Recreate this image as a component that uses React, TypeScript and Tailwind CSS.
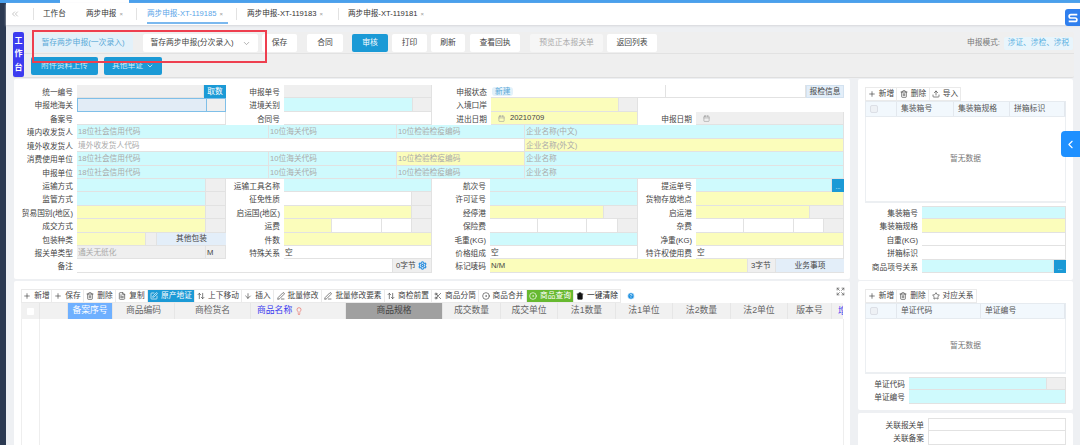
import type { ReactNode } from "react";
import {
  ArrowDown,
  ArrowUpDown,
  Calendar,
  ChevronDown,
  ChevronLeft,
  ChevronsLeft,
  CircleDot,
  CircleHelp,
  Expand,
  FileText,
  Lightbulb,
  PenLine,
  Plus,
  Scissors,
  Settings,
  SquarePen,
  Star,
  Trash2,
  Upload,
} from "lucide-react";

const CYAN = "bg-[#cffafd]";
const YELLOW = "bg-[#fbfdbb]";
const GRAY = "bg-[#efefef]";
const WHITE = "bg-white";

function Label({ className, children }: { className: string; children: ReactNode }) {
  return (
    <div className={`${className} h-full shrink-0 pr-[4px] text-right text-[7.7px] leading-[15px] text-[#444] whitespace-nowrap`}>
      {children}
    </div>
  );
}

function Cell({ className, children }: { className: string; children?: ReactNode }) {
  return (
    <div className={`${className} h-full shrink-0 border-r border-b border-[#e2e2e2] pl-[1px] text-[7.7px] leading-[14px] text-[#aaa] whitespace-nowrap overflow-hidden`}>
      {children}
    </div>
  );
}

function Row({ children }: { children: ReactNode }) {
  return <div className="flex h-[13.43px]">{children}</div>;
}

function Tab({ text, active, close = true, className }: { text: string; active?: boolean; close?: boolean; className: string }) {
  return (
    <div className={`${className} relative flex h-full items-center`}>
      <span className={`text-[7.6px] whitespace-nowrap ${active ? "text-[#5aa5e8]" : "text-[#333]"}`}>{text}</span>
      {close && <span className="ml-[3px] text-[6px] text-[#999]">×</span>}
      {active && <div className="absolute bottom-[1px] left-0 h-[2px] w-[81px] bg-[#7ab8ef]" />}
    </div>
  );
}

function TabSep() {
  return <div className="h-[12px] w-px shrink-0 bg-[#e2e2e2]" />;
}

function TopBtn({ className, children }: { className: string; children: ReactNode }) {
  return (
    <div className={`${className} flex h-[18px] shrink-0 items-center justify-center rounded-[2px] text-[7.8px] whitespace-nowrap`}>
      {children}
    </div>
  );
}

function Tool({ icon, text, className = "text-[#555]" }: { icon: ReactNode; text: string; className?: string }) {
  return (
    <div className={`${className} flex h-full shrink-0 items-center justify-center gap-[3px] border-y border-r border-[#eaeaea] text-[7.7px] whitespace-nowrap`}>
      {icon}
      {text}
    </div>
  );
}

function Head({ className, children }: { className: string; children?: ReactNode }) {
  return (
    <div className={`${className} flex h-full shrink-0 items-center justify-center border-r border-[#e6e6e6] text-[8.8px] whitespace-nowrap overflow-hidden`}>
      {children}
    </div>
  );
}

function SideHead({ className, children }: { className: string; children?: ReactNode }) {
  return (
    <div className={`${className} flex h-full shrink-0 items-center border-r border-[#e3e8ee] pl-[4px] text-[7.8px] text-[#555] whitespace-nowrap`}>
      {children}
    </div>
  );
}

function Check() {
  return <div className="h-[8px] w-[8px] rounded-[2px] border border-[#dcdfe6] bg-[#eef1f5]" />;
}

function Dots() {
  return (
    <div className="flex h-full w-[12px] shrink-0 items-end justify-center bg-[#1b9ad6] pb-[2px] text-[6px] leading-[6px] text-white">
      ...
    </div>
  );
}

export default function App() {
  const ic = "h-[8px] w-[8px] shrink-0";
  return (
    <div className="relative flex h-[445px] w-[1080px] flex-col overflow-hidden bg-[#eef0f3] font-['Liberation_Sans','Noto_Sans_CJK_SC',sans-serif]">
      {/* top strip */}
      <div className="flex h-[3px] shrink-0 bg-[#4aa0ec]">
        <div className="ml-[60px] w-[69px] bg-white" />
      </div>

      <div className="flex min-h-0 flex-1">
        <div className="w-[6px] shrink-0 bg-[#2c3a52]" />

        <div className="flex min-w-0 flex-1 flex-col">
          {/* tabs */}
          <div className="flex h-[22px] shrink-0 items-center bg-white shadow-[0_1px_2px_#d5d7da]">
            <ChevronsLeft className="ml-[4px] h-[10px] w-[10px] text-[#bbb]" />
            <div className="ml-[13px]"><TabSep /></div>
            <Tab text="工作台" close={false} className="ml-[9px] w-[43px]" />
            <Tab text="两步申报" className="w-[50px]" />
            <TabSep />
            <Tab text="两步申报-XT-119185" active className="ml-[10px] w-[89px]" />
            <TabSep />
            <Tab text="两步申报-XT-119183" className="ml-[10px] w-[91px]" />
            <TabSep />
            <Tab text="两步申报-XT-119181" className="ml-[9px] w-[90px]" />
          </div>

          {/* action panel */}
          <div className="ml-[7px] mt-[7px] flex h-[46px] w-[1061px] shrink-0 rounded-[2px] border-b border-[#dfdfdf] bg-[#efefef]">
            <div className="flex w-[11px] shrink-0 flex-col items-center justify-around rounded-[2px] bg-[#3c3cf0] py-[2px] text-[8px] font-bold text-white">
              <span>工</span>
              <span>作</span>
              <span>台</span>
            </div>
            <div className="min-w-0 flex-1">
              <div className="flex h-[22px] items-center border-b border-[#e2e2e2] pt-[1px]">
                <TopBtn className="ml-[9px] w-[100px] bg-[#e3f1fa] text-[#5aa9d8]">暂存两步申报(一次录入)</TopBtn>
                <TopBtn className="ml-[10px] w-[115px] gap-[8px] bg-white text-[#444]">
                  暂存两步申报(分次录入)
                  <ChevronDown className="h-[9px] w-[9px] text-[#999]" />
                </TopBtn>
                <TopBtn className="ml-[4px] w-[35px] bg-white text-[#444]">保存</TopBtn>
                <TopBtn className="ml-[10px] w-[36px] bg-white text-[#444]">合同</TopBtn>
                <TopBtn className="ml-[9px] w-[36px] bg-[#1b9ad6] text-white">审核</TopBtn>
                <TopBtn className="ml-[4px] w-[35px] bg-white text-[#444]">打印</TopBtn>
                <TopBtn className="ml-[4px] w-[34px] bg-white text-[#444]">刷新</TopBtn>
                <TopBtn className="ml-[5px] w-[50px] bg-white text-[#444]">查看回执</TopBtn>
                <TopBtn className="ml-[10px] w-[73px] bg-[#f6f6f6] text-[#aaa]">预览正本报关单</TopBtn>
                <TopBtn className="ml-[4px] w-[50px] bg-white text-[#444]">返回列表</TopBtn>
                <div className="ml-auto flex items-center pr-[1px]">
                  <span className="mr-[4px] text-[7.7px] text-[#777]">申报模式:</span>
                  <div className="flex h-[13px] w-[69px] items-center justify-center rounded-[2px] bg-[#e8f5fc] text-[7.7px] text-[#5cb2e2]">
                    涉证、涉检、涉税
                  </div>
                </div>
              </div>
              <div className="flex h-[23px] items-center">
                <TopBtn className="ml-[7px] w-[67px] bg-[#1b9ad6] text-[#d4ecf8]">附件资料上传</TopBtn>
                <TopBtn className="ml-[6px] w-[58px] gap-[3px] bg-[#1b9ad6] text-[#d4ecf8]">
                  其他单证
                  <ChevronDown className="h-[8px] w-[8px] text-white" />
                </TopBtn>
              </div>
            </div>
          </div>

          <div className="ml-[8px] mt-px flex min-h-0 flex-1 gap-[8px]">
            {/* left column */}
            <div className="flex w-[836px] shrink-0 flex-col gap-[2px]">
              <div className="h-[200px] shrink-0 rounded-[2px] bg-white pt-[6px]">
                <Row>
                  <Label className="w-[63px]">统一编号</Label>
                  <Cell className={`w-[127px] ${GRAY}`} />
                  <div className="flex h-full w-[22px] shrink-0 items-center justify-center bg-[#1b9ad6] text-[7.7px] text-white">取数</div>
                  <Label className="w-[58px]">申报单号</Label>
                  <Cell className={`w-[148px] ${GRAY}`} />
                  <Label className="w-[59px]">申报状态</Label>
                  <Cell className={`w-[175px] ${WHITE}`}>
                    <span className="rounded-[3px] bg-[#e3f1fa] px-[3px] text-[#5aa9d8]">新建</span>
                  </Cell>
                  <Cell className={`w-[140px] ${WHITE}`} />
                  <div className="flex h-full w-[38px] shrink-0 items-center justify-center border border-[#d3e2f0] bg-[#e3eef9] text-[7.7px] text-[#444]">报检信息</div>
                </Row>
                <Row>
                  <Label className="w-[63px]">申报地海关</Label>
                  <div className="flex h-full w-[149px] shrink-0 border border-[#7fbfe8]">
                    <div className="w-[129px] border-r border-[#7fbfe8] bg-[#e2ecf6]" />
                    <div className={`flex-1 ${GRAY}`} />
                  </div>
                  <Label className="w-[58px]">进境关别</Label>
                  <Cell className={`w-[129px] ${CYAN}`} />
                  <Cell className={`w-[19px] ${GRAY}`} />
                  <Label className="w-[59px]">入境口岸</Label>
                  <Cell className={`w-[128px] ${YELLOW}`} />
                  <Cell className={`w-[19px] ${GRAY}`} />
                </Row>
                <Row>
                  <Label className="w-[63px]">备案号</Label>
                  <Cell className={`w-[149px] ${WHITE}`} />
                  <Label className="w-[58px]">合同号</Label>
                  <Cell className={`w-[148px] ${WHITE}`} />
                  <Label className="w-[59px]">进出日期</Label>
                  <Cell className={`w-[147px] ${YELLOW}`}>
                    <div className="flex h-full items-center pl-[6px] text-[#444]">
                      <Calendar className="mr-[5px] h-[7px] w-[7px] text-[#999]" />
                      20210709
                    </div>
                  </Cell>
                  <Label className="w-[58px]">申报日期</Label>
                  <Cell className={`w-[148px] ${GRAY}`}>
                    <div className="flex h-full items-center pl-[6px]">
                      <Calendar className="h-[7px] w-[7px] text-[#999]" />
                    </div>
                  </Cell>
                </Row>
                <Row>
                  <Label className="w-[63px]">境内收发货人</Label>
                  <Cell className={`w-[192px] ${CYAN}`}>18位社会信用代码</Cell>
                  <Cell className={`w-[128px] ${CYAN}`}>10位海关代码</Cell>
                  <Cell className={`w-[128px] ${CYAN}`}>10位检验检疫编码</Cell>
                  <Cell className={`w-[319px] ${CYAN}`}>企业名称(中文)</Cell>
                </Row>
                <Row>
                  <Label className="w-[63px]">境外收发货人</Label>
                  <Cell className={`w-[448px] ${WHITE}`}>境外收发货人代码</Cell>
                  <Cell className={`w-[319px] ${YELLOW}`}>企业名称(外文)</Cell>
                </Row>
                <Row>
                  <Label className="w-[63px]">消费使用单位</Label>
                  <Cell className={`w-[192px] ${CYAN}`}>18位社会信用代码</Cell>
                  <Cell className={`w-[128px] ${CYAN}`}>10位海关代码</Cell>
                  <Cell className={`w-[128px] ${YELLOW}`}>10位检验检疫编码</Cell>
                  <Cell className={`w-[319px] ${CYAN}`}>企业名称</Cell>
                </Row>
                <Row>
                  <Label className="w-[63px]">申报单位</Label>
                  <Cell className={`w-[192px] ${CYAN}`}>18位社会信用代码</Cell>
                  <Cell className={`w-[128px] ${CYAN}`}>10位海关代码</Cell>
                  <Cell className={`w-[128px] ${CYAN}`}>10位检验检疫编码</Cell>
                  <Cell className={`w-[319px] ${CYAN}`}>企业名称</Cell>
                </Row>
                <Row>
                  <Label className="w-[63px]">运输方式</Label>
                  <Cell className={`w-[129px] ${CYAN}`} />
                  <Cell className={`w-[20px] ${GRAY}`} />
                  <Label className="w-[58px]">运输工具名称</Label>
                  <Cell className={`w-[148px] ${CYAN}`} />
                  <Label className="w-[58px]">航次号</Label>
                  <Cell className={`w-[148px] ${CYAN}`} />
                  <Label className="w-[58px]">提运单号</Label>
                  <Cell className={`w-[136px] ${CYAN}`} />
                  <Dots />
                </Row>
                <Row>
                  <Label className="w-[63px]">监管方式</Label>
                  <Cell className={`w-[129px] ${CYAN}`} />
                  <Cell className={`w-[20px] ${GRAY}`} />
                  <Label className="w-[58px]">征免性质</Label>
                  <Cell className={`w-[128px] ${WHITE}`} />
                  <Cell className={`w-[20px] ${GRAY}`} />
                  <Label className="w-[58px]">许可证号</Label>
                  <Cell className={`w-[148px] ${CYAN}`} />
                  <Label className="w-[58px]">货物存放地点</Label>
                  <Cell className={`w-[148px] ${YELLOW}`} />
                </Row>
                <Row>
                  <Label className="w-[63px]">贸易国别(地区)</Label>
                  <Cell className={`w-[129px] ${YELLOW}`} />
                  <Cell className={`w-[20px] ${GRAY}`} />
                  <Label className="w-[58px]">启运国(地区)</Label>
                  <Cell className={`w-[128px] ${YELLOW}`} />
                  <Cell className={`w-[20px] ${GRAY}`} />
                  <Label className="w-[58px]">经停港</Label>
                  <Cell className={`w-[114px] ${YELLOW}`} />
                  <Cell className={`w-[34px] ${GRAY}`} />
                  <Label className="w-[58px]">启运港</Label>
                  <Cell className={`w-[114px] ${YELLOW}`} />
                  <Cell className={`w-[34px] ${GRAY}`} />
                </Row>
                <Row>
                  <Label className="w-[63px]">成交方式</Label>
                  <Cell className={`w-[129px] ${YELLOW}`} />
                  <Cell className={`w-[20px] ${GRAY}`} />
                  <Label className="w-[58px]">运费</Label>
                  <Cell className={`w-[48px] ${YELLOW}`} />
                  <Cell className={`w-[50px] ${WHITE}`} />
                  <Cell className={`w-[30px] ${WHITE}`} />
                  <Cell className={`w-[20px] ${GRAY}`} />
                  <Label className="w-[58px]">保险费</Label>
                  <Cell className={`w-[48px] ${WHITE}`} />
                  <Cell className={`w-[49px] ${WHITE}`} />
                  <Cell className={`w-[31px] ${WHITE}`} />
                  <Cell className={`w-[20px] ${GRAY}`} />
                  <Label className="w-[58px]">杂费</Label>
                  <Cell className={`w-[48px] ${WHITE}`} />
                  <Cell className={`w-[50px] ${WHITE}`} />
                  <Cell className={`w-[30px] ${WHITE}`} />
                  <Cell className={`w-[20px] ${GRAY}`} />
                </Row>
                <Row>
                  <Label className="w-[63px]">包装种类</Label>
                  <Cell className={`w-[69px] ${YELLOW}`} />
                  <Cell className={`w-[11px] ${GRAY}`} />
                  <div className="flex h-full w-[69px] shrink-0 items-center justify-center border-b border-[#e2e2e2] bg-[#e3eef9] text-[7.7px] text-[#444]">其他包装</div>
                  <Label className="w-[58px]">件数</Label>
                  <Cell className={`w-[148px] ${YELLOW}`} />
                  <Label className="w-[58px]">毛重(KG)</Label>
                  <Cell className={`w-[148px] ${CYAN}`} />
                  <Label className="w-[58px]">净重(KG)</Label>
                  <Cell className={`w-[148px] ${YELLOW}`} />
                </Row>
                <Row>
                  <Label className="w-[63px]">报关单类型</Label>
                  <Cell className={`w-[129px] ${GRAY}`}>通关无纸化</Cell>
                  <Cell className={`w-[20px] ${GRAY}`}><span className="text-[#444]">M</span></Cell>
                  <Label className="w-[58px]">特殊关系</Label>
                  <Cell className={`w-[148px] ${WHITE}`}><span className="text-[#444]">空</span></Cell>
                  <Label className="w-[58px]">价格组成</Label>
                  <Cell className={`w-[148px] ${WHITE}`}><span className="text-[#444]">空</span></Cell>
                  <Label className="w-[58px]">特许权使用费</Label>
                  <Cell className={`w-[148px] ${WHITE}`}><span className="text-[#444]">空</span></Cell>
                </Row>
                <Row>
                  <Label className="w-[63px]">备注</Label>
                  <Cell className={`w-[316px] ${WHITE}`} />
                  <Cell className={`w-[39px] ${GRAY}`}>
                    <div className="flex h-full items-center pl-[2px] text-[#444]">
                      0字节
                      <Settings className="ml-[2px] h-[9px] w-[9px] text-[#2a8fe0]" strokeWidth={3} />
                    </div>
                  </Cell>
                  <Label className="w-[58px]">标记唛码</Label>
                  <Cell className={`w-[258px] ${YELLOW}`}><span className="text-[#444]">N/M</span></Cell>
                  <Cell className={`w-[28px] ${GRAY}`}><span className="pl-[2px] text-[#444]">3字节</span></Cell>
                  <div className="flex h-full w-[68px] shrink-0 items-center justify-center border-b border-[#e2e2e2] bg-[#e3eef9] text-[7.7px] text-[#444]">业务事项</div>
                </Row>
              </div>

              {/* goods table */}
              <div className="relative min-h-0 flex-1 rounded-t-[2px] bg-white px-[7px] pt-[8px]">
                <div className="absolute right-[5px] top-[6px]">
                  <Expand className="h-[9px] w-[9px] text-[#666]" />
                </div>
                <div className="flex h-[14px] items-stretch">
                  <Tool className="w-[31px] border-l text-[#444]" icon={<Plus className={ic} />} text="新增" />
                  <Tool className="w-[32px] text-[#444]" icon={<Plus className={ic} />} text="保存" />
                  <Tool className="w-[32px] text-[#444]" icon={<Trash2 className={ic} />} text="删除" />
                  <Tool className="w-[32px] text-[#444]" icon={<FileText className={ic} />} text="复制" />
                  <Tool className="w-[47px] bg-[#1b9ad6] text-white" icon={<SquarePen className={ic} />} text="原产地证" />
                  <Tool className="w-[47px] text-[#444]" icon={<ArrowUpDown className={ic} />} text="上下移动" />
                  <Tool className="w-[32px] text-[#444]" icon={<ArrowDown className={ic} />} text="插入" />
                  <Tool className="w-[48px] text-[#444]" icon={<PenLine className={ic} />} text="批量修改" />
                  <Tool className="w-[63px] text-[#444]" icon={<PenLine className={ic} />} text="批量修改要素" />
                  <Tool className="w-[47px] text-[#444]" icon={<ArrowUpDown className={ic} />} text="商检前置" />
                  <Tool className="w-[47px] text-[#444]" icon={<Scissors className={ic} />} text="商品分筒" />
                  <Tool className="w-[48px] text-[#444]" icon={<CircleDot className={ic} />} text="商品合并" />
                  <Tool className="w-[47px] bg-[#67b930] text-white" icon={<CircleDot className={ic} />} text="商品查询" />
                  <Tool className="w-[47px] text-[#222]" icon={<Trash2 className={`${ic} fill-[#111]`} />} text="一键清除" />
                  <div className="ml-[6px] flex items-center">
                    <CircleHelp className="h-[8px] w-[8px] fill-[#1b8fe0] text-white" />
                  </div>
                </div>
                <div className="flex h-[16px] w-[822px] overflow-hidden bg-[#f1f1f1] text-[#666]">
                  <Head className="w-[19px]"><div className="h-[7px] w-[7px] rounded-[1px] bg-white" /></Head>
                  <Head className="w-[28px]" />
                  <Head className="w-[45px] bg-[#6fb0ff] text-white">备案序号</Head>
                  <Head className="w-[62px]">商品编码</Head>
                  <Head className="w-[76px]">商检货名</Head>
                  <Head className="w-[95px] !justify-start pl-[6px] text-[#3a3af0]">
                    商品名称
                    <Lightbulb className="ml-[3px] h-[8px] w-[8px] text-[#e8645a]" />
                  </Head>
                  <Head className="w-[97px] bg-[#a0a0a0] text-[#444]">商品规格</Head>
                  <Head className="w-[58px]">成交数量</Head>
                  <Head className="w-[57px]">成交单位</Head>
                  <Head className="w-[58px]">法1数量</Head>
                  <Head className="w-[57px]">法1单位</Head>
                  <Head className="w-[58px]">法2数量</Head>
                  <Head className="w-[57px]">法2单位</Head>
                  <Head className="w-[44px]">版本号</Head>
                  <div className="pl-[6px] text-[8.8px] leading-[16px] text-[#3a3af0] whitespace-nowrap">增</div>
                </div>
                <div className="flex h-full w-[823px] border-x border-[#eeeeee]">
                  <div className="w-[18px] border-r border-[#eeeeee]" />
                </div>
              </div>
            </div>

            {/* right column */}
            <div className="flex w-[215px] shrink-0 flex-col">
              <div className="h-[201px] shrink-0 rounded-[2px] bg-white px-[7px] pt-[8px]">
                <div className="flex h-[14px]">
                  <Tool className="w-[32px] border-l text-[#444]" icon={<Plus className={ic} />} text="新增" />
                  <Tool className="w-[33px] text-[#444]" icon={<Trash2 className={ic} />} text="删除" />
                  <Tool className="w-[31px] text-[#444]" icon={<Upload className={ic} />} text="导入" />
                </div>
                <div className="flex h-[16px] w-[201px] border border-[#e6ebf0] bg-[#f2f8fd]">
                  <SideHead className="w-[31px]"><Check /></SideHead>
                  <SideHead className="w-[57px]">集装箱号</SideHead>
                  <SideHead className="w-[56px]">集装箱规格</SideHead>
                  <SideHead className="w-[55px]">拼箱标识</SideHead>
                </div>
                <div className="flex h-[86px] w-[201px] items-center justify-center border-x border-b-2 border-[#eceff2] text-[7.7px] text-[#777]">暂无数据</div>
                <div className="mt-[3px] w-[201px]">
                  <Row>
                    <Label className="w-[57px]">集装箱号</Label>
                    <Cell className={`w-[144px] border-t ${CYAN}`} />
                  </Row>
                  <Row>
                    <Label className="w-[57px]">集装箱规格</Label>
                    <Cell className={`w-[144px] ${YELLOW}`} />
                  </Row>
                  <Row>
                    <Label className="w-[57px]">自重(KG)</Label>
                    <Cell className={`w-[144px] ${WHITE}`} />
                  </Row>
                  <Row>
                    <Label className="w-[57px]">拼箱标识</Label>
                    <Cell className={`w-[144px] ${WHITE}`} />
                  </Row>
                  <Row>
                    <Label className="w-[57px]">商品项号关系</Label>
                    <Cell className={`w-[132px] ${CYAN}`} />
                    <Dots />
                  </Row>
                </div>
              </div>

              <div className="mt-px h-[129px] shrink-0 rounded-[2px] bg-white px-[7px] pt-[8px]">
                <div className="flex h-[14px]">
                  <Tool className="w-[32px] border-l text-[#444]" icon={<Plus className={ic} />} text="新增" />
                  <Tool className="w-[32px] text-[#444]" icon={<Trash2 className={ic} />} text="删除" />
                  <Tool className="w-[48px] text-[#444]" icon={<Star className={ic} />} text="对应关系" />
                </div>
                <div className="flex h-[16px] w-[201px] border border-[#e6ebf0] bg-[#f2f8fd]">
                  <SideHead className="w-[31px]"><Check /></SideHead>
                  <SideHead className="w-[84px]">单证代码</SideHead>
                  <SideHead className="w-[84px]">单证编号</SideHead>
                </div>
                <div className="flex h-[55px] w-[201px] items-center justify-center border-x border-b-2 border-[#eceff2] text-[7.7px] text-[#777]">暂无数据</div>
                <div className="mt-[3px] w-[201px]">
                  <Row>
                    <Label className="w-[44px]">单证代码</Label>
                    <Cell className={`w-[138px] border-t ${CYAN}`} />
                    <Cell className={`w-[19px] border-t ${GRAY}`} />
                  </Row>
                  <Row>
                    <Label className="w-[44px]">单证编号</Label>
                    <Cell className={`w-[157px] ${CYAN}`} />
                  </Row>
                </div>
              </div>

              <div className="mt-[3px] min-h-0 flex-1 rounded-t-[2px] bg-white px-[7px] pt-[5px]">
                <div className="w-[201px]">
                  <Row>
                    <Label className="w-[63px]">关联报关单</Label>
                    <Cell className={`w-[138px] border-t border-l ${WHITE}`} />
                  </Row>
                  <Row>
                    <Label className="w-[63px]">关联备案</Label>
                    <Cell className={`w-[138px] border-l ${WHITE}`} />
                  </Row>
                </div>
              </div>
            </div>
          </div>
        </div>
      </div>

      {/* red annotation box */}
      <div className="pointer-events-none absolute left-[32px] top-[30px] h-[33px] w-[235px] border-2 border-[#ee3f4f]" />

      {/* floating logo */}
      <div className="absolute right-0 top-[9px] flex h-[17px] w-[15px] items-center justify-center rounded-l-[3px] bg-[#2f7fee]">
        <svg viewBox="0 0 14 14" className="h-[12px] w-[12px]" fill="none" stroke="white" strokeWidth="2">
          <path d="M12 3H4.5a2 2 0 0 0 0 4h5a2 2 0 0 1 0 4H2" />
        </svg>
      </div>

      {/* floating side tab */}
      <div className="absolute right-0 top-[131px] flex h-[26px] w-[19px] items-center justify-center rounded-l-[4px] bg-[#1e90ff]">
        <ChevronLeft className="h-[13px] w-[13px] text-white" />
      </div>
    </div>
  );
}
